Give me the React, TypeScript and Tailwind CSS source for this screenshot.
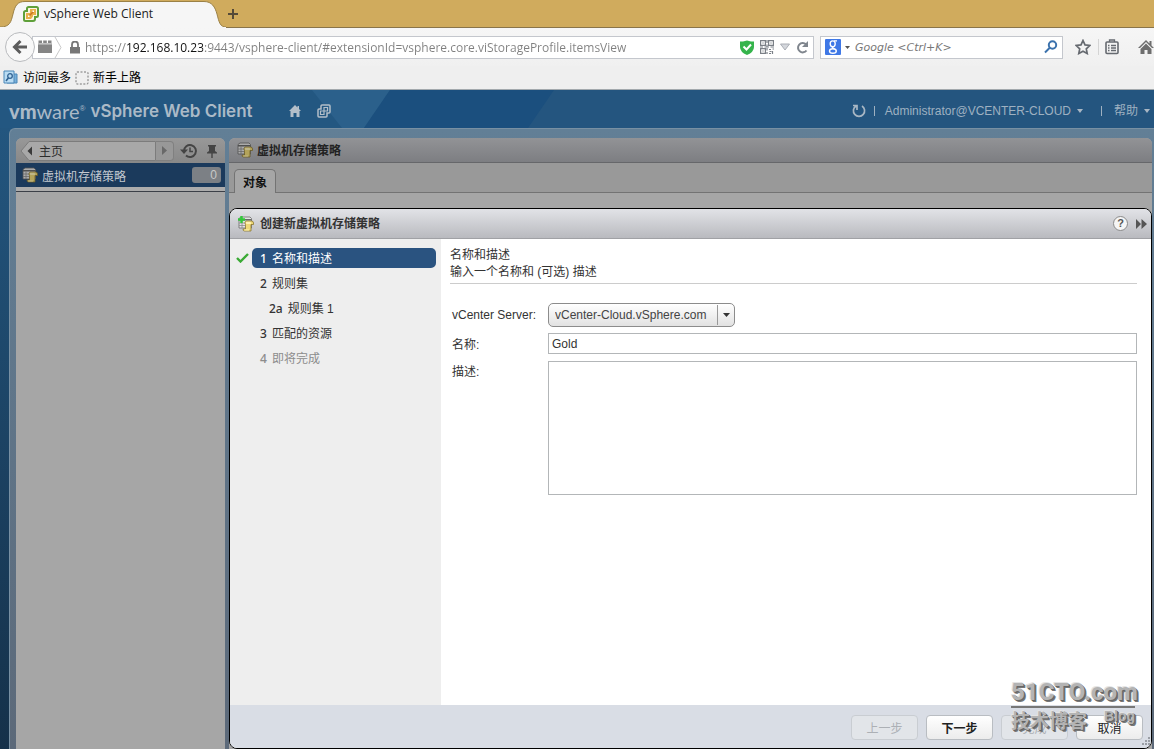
import { useState } from 'react';

const UI_FONT = 'font-["Liberation_Sans","Noto_Sans_CJK_SC",sans-serif]';
const CHROME_FONT = 'font-["Open_Sans","Noto_Sans_CJK_SC",sans-serif]';

interface Step {
  id: string;
  no: string;
  label: string;
  sub?: boolean;
  disabled?: boolean;
}

const STEPS: Step[] = [
  { id: 'name', no: '1', label: '名称和描述' },
  { id: 'rules', no: '2', label: '规则集' },
  { id: 'rules-1', no: '2a', label: '规则集 1', sub: true },
  { id: 'resources', no: '3', label: '匹配的资源' },
  { id: 'finish', no: '4', label: '即将完成', disabled: true },
];

function VSphereLogo() {
  return (
    <svg width="16" height="16" viewBox="0 0 16 16" fill="none">
      <path d="M5.5 1h8A1.5 1.5 0 0 1 15 2.5v7a1.5 1.5 0 0 1-1.5 1.500H12v2a2 2 0 0 1-2 2H2.500A1.500 1.500 0 0 1 1 13.500V6.500A1.500 1.500 0 0 1 2.500 5H4V2.500A1.500 1.500 0 0 1 5.500 1z" fill="#fdf6e4" stroke="#5fa03a" strokeWidth="2" />
      <path d="M7 3h6v6h-3v1.500L8 13H3V7h4z" fill="#e8b04a" />
      <path d="M6.500 9.500l4-4" stroke="#c9731f" strokeWidth="1.500" />
      <path d="M5 9.500h1.500V11H5zM9.500 4.500H11V6H9.500z" fill="#fff" />
    </svg>
  );
}

function PolicyIcon({ dim, add }: { dim?: boolean; add?: boolean }) {
  return (
    <svg width="16" height="16" viewBox="0 0 16 16" className={dim ? 'brightness-75' : ''}>
      <path d="M1 2.500L3 1h9l1.500 1.500V12H1z" fill="#e4e4e4" stroke="#6a6a6a" strokeWidth=".8" />
      <path d="M1 3h12.500v1.500H1z" fill="#6a6a6a" />
      <path d="M1 7h6M1 9.500h6M4 4.500V12" stroke="#8c8c8c" strokeWidth=".8" />
      <path d="M8 5h5.500Q15.500 5 15.500 7v1.500H13V15H6.500Q5 15 5 13h2.500V8.500Q6 7 8 5z" fill="#efd978" stroke="#8b7732" strokeWidth=".8" />
      <path d="M8 5.800h4.500Q13 6.500 13 8H8.500Q7.500 7 8 5.800zM5.800 13.500H11V14.400H6.500z" fill="#fff3b4" />
      {add && <path d="M3.500 0v7M0 3.500h7" stroke="#32c83a" strokeWidth="2.400" />}
    </svg>
  );
}

function BrowserTabs() {
  return (
    <div className="relative flex h-7 items-center border-b border-[#89744a] bg-[#d0ab5d]">
      <svg className="absolute left-0 top-0" width="226" height="28" viewBox="0 0 226 28">
        <path d="M0 28V27C10 27 11 22 13 14C15 5 18 1.500 25 1.500H204C212 1.500 215 7 217 14C219 22 220 27 226 27V28z" fill="#f6f6f6" stroke="#9b8146" strokeWidth="1" />
        <path d="M0 27.500H226" stroke="#f6f6f6" />
      </svg>
      <div className={`relative flex w-[227px] items-center gap-1 pl-[23px] text-xs text-[#222] ${CHROME_FONT}`}>
        <VSphereLogo />
        <span className="pl-px">vSphere Web Client</span>
      </div>
      <button aria-label="New tab" className="relative">
        <svg width="12" height="12" viewBox="0 0 12 12">
          <path d="M6 1v10M1 6h10" stroke="#554a38" strokeWidth="2" />
        </svg>
      </button>
    </div>
  );
}

function AddressBar() {
  const [url, setUrl] = useState('https://192.168.10.23:9443/vsphere-client/#extensionId=vsphere.core.viStorageProfile.itemsView');

  return (
    <div className="relative flex min-w-0 flex-1 items-center">
      <button aria-label="Back" className="absolute left-0 flex h-[30px] w-[30px] items-center justify-center rounded-full border border-[#b9bbbe] bg-[#f8f8f8]">
        <svg width="16" height="16" viewBox="0 0 16 16" fill="none">
          <path d="M8.500 2L2.500 8l6 6M3 8h12" stroke="#5c5c5c" strokeWidth="3" />
        </svg>
      </button>
      <div className="ml-[27px] flex h-[23px] min-w-0 flex-1 items-center border border-[#c4c7cd] bg-white pl-1 pr-1">
        <svg width="16" height="14" viewBox="0 0 16 14" className="shrink-0">
          <path d="M1 3.500h14V13H1zM1.500 0.500h3.500v2.500H1.500zM6.200 0.500h3.600v2.500H6.200zM11 0.500h3.500v2.500H11z" fill="#858585" />
          <path d="M1 4.500h14" stroke="#aaa" />
        </svg>
        <svg width="8" height="21" viewBox="0 0 8 21" className="ml-px shrink-0" fill="none">
          <path d="M1 0l6 10.500L1 21" stroke="#c8c8c8" />
        </svg>
        <svg width="10" height="13" viewBox="0 0 10 13" className="ml-2 shrink-0">
          <path d="M0 6h10v6.500H0z" fill="#777" />
          <path d="M2 7V3.500a3 3 0 0 1 6 0V7" stroke="#777" strokeWidth="1.800" fill="none" />
        </svg>
        <input
          aria-label="URL"
          value={url}
          onChange={(e) => setUrl(e.target.value)}
          className={`ml-[5px] min-w-0 flex-1 bg-[linear-gradient(90deg,#808080_0_41px,#111_41px_118px,#808080_118px)] bg-clip-text pt-0.5 text-xs text-transparent outline-none ${CHROME_FONT}`}
        />
        <div className="flex shrink-0 items-center gap-1.5">
          <svg width="14" height="15" viewBox="0 0 14 15">
            <path d="M0 1.500h3L7 .5l4 1h3V7q0 5-7 8Q0 12 0 7z" fill="#35b44c" />
            <path d="M3.500 6.500L6.500 9.500l4.500-5" stroke="#fff" strokeWidth="2" fill="none" />
          </svg>
          <svg width="14" height="14" viewBox="0 0 14 14" fill="none" stroke="#7b8087" strokeWidth="1.200">
            <path d="M.6.6h4.800v4.800H.6zM8.600.6h4.800v4.800H8.600zM.6 8.600h4.800v4.800H.6z" />
            <path d="M2.400 3h1.200M10.400 3h1.200M2.400 11h1.200M7 0v3M7 4.500v2M0 7h3M4.500 7H9M10.500 7H14M7 8v2.500M7 12v2M9 9.500h2M12.500 9h1.500M9.500 11.500h2M12.500 11v3M9 13.500h2" />
          </svg>
          <svg width="10" height="8" viewBox="0 0 10 8">
            <path d="M.5 1h9L5 7z" fill="#d4d7dc" stroke="#aaaeb5" />
          </svg>
          <svg width="13" height="13" viewBox="0 0 13 13" fill="none">
            <path d="M10.500 9.500A4.700 4.700 0 1 1 10 3.300" stroke="#7f858d" strokeWidth="2" />
            <path d="M12 0v6H6z" fill="#7f858d" />
          </svg>
        </div>
      </div>
    </div>
  );
}

function SearchBox() {
  return (
    <div className="ml-1.5 flex h-[23px] w-[243px] shrink-0 items-center border border-[#c4c7cd] bg-white pl-1 pr-1">
      <svg width="16" height="16" viewBox="0 0 16 16" className="shrink-0" fill="none">
        <rect width="16" height="16" rx="1" fill="#3f78e6" />
        <ellipse cx="7.700" cy="4.800" rx="2.500" ry="2.900" stroke="#fff" strokeWidth="1.400" />
        <ellipse cx="7.900" cy="12" rx="3.400" ry="2.300" stroke="#fff" strokeWidth="1.400" />
        <path d="M9 1.900h3M7.800 7.500Q6.500 8.500 9.500 9.800" stroke="#fff" strokeWidth="1.400" />
      </svg>
      <svg width="5" height="3" viewBox="0 0 5 3" className="ml-1 shrink-0">
        <path d="M0 0h5L2.500 3z" fill="#555" />
      </svg>
      <input
        aria-label="Search"
        placeholder="Google <Ctrl+K>"
        className="ml-[5px] min-w-0 flex-1 bg-transparent pt-0.5 font-['DejaVu_Sans',sans-serif] text-[11px] italic outline-none placeholder:text-[#777]"
      />
      <svg width="14" height="14" viewBox="0 0 14 14" fill="none" stroke="#3b72ad" strokeWidth="2">
        <circle cx="8.500" cy="5" r="3.700" />
        <path d="M6 7.500L1 12.500" />
      </svg>
    </div>
  );
}

function BrowserToolbar() {
  return (
    <div className="flex h-[38px] items-center overflow-hidden bg-linear-to-b from-[#f6f6f6] to-[#f0f0f0] pl-[5px]">
      <AddressBar />
      <SearchBox />
      <div className="flex shrink-0 items-center pl-3">
        <button aria-label="Bookmark">
          <svg width="16" height="16" viewBox="0 0 16 16" fill="none">
            <path d="M8 1.500l2 4.400 4.800.6-3.500 3.300.9 4.700L8 12.200l-4.200 2.300.9-4.700L1.200 6.500 6 5.900z" stroke="#666a70" strokeWidth="1.700" />
          </svg>
        </button>
        <span className="ml-[7px] h-4 w-px bg-[#d4d4d4]" />
        <button aria-label="Bookmarks list" className="ml-1.5">
          <svg width="14" height="16" viewBox="0 0 14 16" fill="none" stroke="#666a70" strokeWidth="1.600">
            <rect x="1" y="3" width="12" height="11.500" rx="1" />
            <path d="M4.500 3V1h5v2M3 6.500h1.500M6 6.500h5M3 9h1.500M6 9h5M3 11.500h1.500M6 11.500h5" strokeWidth="1.300" />
          </svg>
        </button>
        <button aria-label="Home" className="ml-[19px]">
          <svg width="16" height="16" viewBox="0 0 16 16" fill="#6e6e6e">
            <path d="M8 1L0 9h2l6-6 6 6h2l-2.500-2.500V2h-2v2.500z" />
            <path d="M8 4.500L2.500 10v5h4v-4h3v4h4v-5z" />
          </svg>
        </button>
      </div>
    </div>
  );
}

function BookmarksBar() {
  return (
    <div className={`flex h-6 items-center border-b border-[#a3a9ad] bg-[#efefef] pl-[3px] text-xs text-black ${CHROME_FONT}`}>
      <a href="#most" className="flex items-center gap-1">
        <svg width="16" height="15" viewBox="0 0 16 15" fill="none">
          <path d="M4 4h10v9H4z" fill="#77aed8" stroke="#4b87b8" />
          <path d="M1 1h10v12H1z" fill="#b9dcf3" stroke="#4b87b8" />
          <circle cx="7" cy="6" r="2.300" stroke="#2f6293" strokeWidth="1.300" />
          <path d="M5.500 7.800L3 11" stroke="#2f6293" strokeWidth="1.600" />
        </svg>
        访问最多
      </a>
      <a href="#start" className="ml-1 flex items-center gap-1">
        <svg width="14" height="14" viewBox="0 0 14 14" fill="none">
          <rect x="1" y="1" width="12" height="12" rx="1" stroke="#777" strokeDasharray="2 1.500" />
        </svg>
        新手上路
      </a>
    </div>
  );
}

function ClientHeader() {
  return (
    <header className="relative flex h-[38px] shrink-0 items-center bg-[#24557f] pl-[9px] pr-1 pt-1">
      <svg className="absolute left-0 top-0" width="554" height="38" viewBox="0 0 554 38">
        <path d="M0 0h390l-26 38H0z" fill="#235781" />
        <path d="M312 0h78l-26 38h-22z" fill="#2b608b" />
        <path d="M390 0h164l-26 38H364z" fill="#1b4f7e" />
      </svg>
      <h1 className="relative flex items-center text-[#abbac7]">
        <span className="font-[Lato,sans-serif] text-xl font-black leading-6">vm</span>
        <span className="font-[Lato,sans-serif] text-xl leading-6">ware</span>
        <span className="mb-1 text-[8px]">®</span>
        <span className="ml-[5px] font-[Inter,sans-serif] text-[17px] font-semibold leading-6">vSphere Web Client</span>
      </h1>
      <button aria-label="Home" className="relative ml-9">
        <svg width="12" height="12" viewBox="0 0 12 12" fill="#b4bfc9">
          <path d="M6 0L0 6h1.500v6h3V8h3v4h3V6H12L10 4V1H8.500v1.500z" />
        </svg>
      </button>
      <button aria-label="vCenter" className="relative ml-4">
        <svg width="14" height="14" viewBox="0 0 14 14" fill="none" stroke="#b4bfc9" strokeWidth="1.500">
          <path d="M5 1h7q1 0 1 1v6q0 1-1 1h-2v3q0 1-1 1H2q-1 0-1-1V6q0-1 1-1h2V2q0-1 1-1z" />
          <path d="M7 3.500h3.500V7H7zM3.500 7H7v3.500H3.500z" strokeWidth="1.200" />
        </svg>
      </button>
      <div className="relative ml-auto flex items-center text-xs text-[#9fb1c1]">
        <button aria-label="Refresh">
          <svg width="14" height="14" viewBox="0 0 14 14" fill="none" stroke="#a9b7c4" strokeWidth="1.700">
            <path d="M10 2a5.600 5.600 0 1 1-6 0M1 1.500h4V6" />
          </svg>
        </button>
        <span className="ml-2 h-2.5 w-px bg-[#9fb1c1]" />
        <button className="ml-2.5 flex items-center gap-1.5">
          Administrator@VCENTER-CLOUD
          <svg width="6" height="4" viewBox="0 0 6 4" fill="#a9b7c4"><path d="M0 0h6L3 4z" /></svg>
        </button>
        <span className="ml-[18px] h-2.5 w-px bg-[#9fb1c1]" />
        <button className="ml-3 flex items-center gap-1.5">
          帮助
          <svg width="6" height="4" viewBox="0 0 6 4" fill="#a9b7c4"><path d="M0 0h6L3 4z" /></svg>
        </button>
      </div>
    </header>
  );
}

function Navigator() {
  return (
    <aside className="flex w-[209px] shrink-0 flex-col overflow-hidden rounded-t-md bg-[#a6a6a6]">
      <div className="flex h-[25px] shrink-0 items-center bg-linear-to-b from-[#989898] to-[#888] pl-1">
        <button className="relative flex h-5 w-[136px] items-center pl-[19px] pt-0.5 text-xs text-[#2b2b2b]">
          <svg className="absolute left-0 top-0" width="136" height="20" viewBox="0 0 136 20">
            <path d="M1 10L9 .5h126.500v19H9z" fill="#a8a8a8" stroke="#7c7c7c" />
            <path d="M12 5.500v9L7.500 10z" fill="#3a3a3a" />
          </svg>
          <span className="relative">主页</span>
        </button>
        <button aria-label="Forward" className="flex h-5 w-[18px] items-center justify-center rounded-r border border-l-0 border-[#808080] bg-[#989898]">
          <svg width="5" height="9" viewBox="0 0 5 9" fill="#696969"><path d="M0 0v9l5-4.500z" /></svg>
        </button>
        <button aria-label="History" className="ml-1.5">
          <svg width="18" height="16" viewBox="0 0 18 16" fill="none" stroke="#444" strokeWidth="2">
            <path d="M4 8a6 6 0 1 1 2 4.500" />
            <path d="M10 4.500V8.500h3" strokeWidth="1.500" />
            <path d="M0 6.500h8L4 11z" fill="#444" stroke="none" />
          </svg>
        </button>
        <button aria-label="Pin" className="ml-2">
          <svg width="12" height="14" viewBox="0 0 12 14" fill="#444">
            <path d="M2 1h8v1.500H9V7l2 1.500V9.500H6.700V14H5.300V9.500H1V8.500L3 7V2.500H2z" />
          </svg>
        </button>
      </div>
      <a href="#policies" className="flex h-6 shrink-0 items-center bg-[#1b3a5c] pl-1.5 pr-1 text-xs text-[#c3c9d0]">
        <PolicyIcon dim />
        <span className="ml-1 pt-1">虚拟机存储策略</span>
        <span className="ml-auto h-4 w-[29px] rounded-[3px] bg-[#7c8085] pr-1 text-right leading-4 text-[#c8c8c8]">0</span>
      </a>
      <div className="h-1 shrink-0 bg-[#acacac]" />
      <div className="flex-1 border-t border-[#3c4048]" />
    </aside>
  );
}

function WizardSteps() {
  const [active, setActive] = useState('name');

  return (
    <nav className="w-[211px] shrink-0 bg-[#eee] pl-1 pt-[9px]">
      <ol className="flex flex-col gap-[5px] pr-[5px]">
        {STEPS.map((step) => (
          <li key={step.id} className="flex items-center">
            <span className="w-[18px] shrink-0 pl-0.5">
              {step.id === 'name' && (
                <svg width="13" height="10" viewBox="0 0 13 10" fill="none">
                  <path d="M1 5l3.500 3.500L12 1" stroke="#3aaa35" strokeWidth="2.400" />
                </svg>
              )}
            </span>
            <button
              disabled={step.disabled}
              onClick={() => setActive(step.id)}
              className={`flex h-5 flex-1 items-center gap-[5px] rounded-[5px] pt-0.5 text-xs ${step.sub ? 'pl-[17px]' : 'pl-2'} ${
                active === step.id ? 'bg-[#2a5380] text-white' : step.disabled ? 'text-[#8c8c8c]' : 'text-[#333]'
              }`}
            >
              <span className='font-["Noto_Sans",sans-serif] font-medium'>{step.no}</span>
              {step.label}
            </button>
          </li>
        ))}
      </ol>
    </nav>
  );
}

function WizardForm() {
  const [name, setName] = useState('Gold');
  const [description, setDescription] = useState('');

  return (
    <div className="min-w-0 flex-1 bg-white pl-[9px] pr-[14px] pt-2 text-xs text-[#333]">
      <div className="border-b border-[#ccc] pb-0.5 leading-[17px]">
        <h3>名称和描述</h3>
        <p>输入一个名称和 (可选) 描述</p>
      </div>
      <div className="mt-[19px] grid grid-cols-[96px_1fr] gap-y-1.5 pl-0.5">
        <label htmlFor="vcenter" className="leading-6">vCenter Server:</label>
        <div className="relative h-6 w-[187px]">
          <select
            id="vcenter"
            className="h-6 w-full appearance-none rounded-[5px] border border-[#8c8c8c] bg-linear-to-b from-white to-[#e2e2e2] pb-px pl-1.5 text-[#444]"
          >
            <option>vCenter-Cloud.vSphere.com</option>
          </select>
          <span className="pointer-events-none absolute right-0 top-[2px] flex h-5 w-[18px] items-center justify-center border-l border-[#999]">
            <svg width="7" height="4" viewBox="0 0 7 4"><path d="M0 0h7L3.500 4z" fill="#333" /></svg>
          </span>
        </div>
        <label htmlFor="name" className="pt-0.5 leading-5">名称:</label>
        <input
          id="name"
          value={name}
          onChange={(e) => setName(e.target.value)}
          className="h-[21px] border border-[#b3b6b8] pl-[3px] text-[#333] outline-none"
        />
        <label htmlFor="description" className="leading-[22px]">描述:</label>
        <textarea
          id="description"
          value={description}
          onChange={(e) => setDescription(e.target.value)}
          className="h-[134px] resize-none border border-[#b3b6b8] p-[3px] outline-none"
        />
      </div>
    </div>
  );
}

function WizardButton({ label, primary, disabled }: { label: string; primary?: boolean; disabled?: boolean }) {
  return (
    <button
      disabled={disabled}
      className={`h-[25px] w-[67px] rounded border pt-0.5 text-xs ${
        disabled
          ? 'border-[#c9cdd2] bg-[#e2e5e9] text-[#acb0b5]'
          : 'border-[#b9bdc2] bg-linear-to-b from-white to-[#ececec] text-[#222]'
      } ${primary ? 'font-bold' : ''}`}
    >
      {label}
    </button>
  );
}

function Watermark() {
  return (
    <div className="pointer-events-none absolute bottom-4 right-4 flex w-[124px] flex-col text-[#b4b4b4] [text-shadow:1px_1px_0_#666,2px_2px_0_#777,-1px_-1px_0_#e4e4e4]">
      <span className="font-[Roboto,sans-serif] text-2xl font-extrabold leading-7">51CTO.com</span>
      <span className="h-0.5 bg-[#777]" />
      <span className="flex items-start justify-between">
        <span className='font-["Noto_Sans_CJK_SC",sans-serif] text-[19px] font-bold leading-6'>技术博客</span>
        <span className='font-["Liberation_Sans",sans-serif] text-sm font-bold leading-4'>Blog</span>
      </span>
    </div>
  );
}

function Wizard() {
  return (
    <section className="relative flex min-h-[400px] flex-1 flex-col overflow-hidden rounded-lg border border-black bg-white">
      <div className="flex h-[30px] shrink-0 items-center border-b border-[#a0a1a5] bg-linear-to-b from-[#e2e3e7] to-[#b9babf] pl-2 pr-1">
        <PolicyIcon add />
        <h2 className="ml-1.5 text-xs font-bold text-[#333]">创建新虚拟机存储策略</h2>
        <button aria-label="Help" className="ml-auto flex h-[15px] w-[15px] items-center justify-center rounded-full border border-[#8a8a8a] bg-[#f5f5f5] text-[11px] font-bold text-[#555]">
          ?
        </button>
        <button aria-label="Minimize" className="ml-2">
          <svg width="11" height="10" viewBox="0 0 11 10" fill="#555"><path d="M0 0l5 5-5 5zM5.500 0l5.500 5-5.500 5z" /></svg>
        </button>
      </div>
      <div className="flex flex-1">
        <WizardSteps />
        <WizardForm />
      </div>
      <div className="flex h-[43px] shrink-0 items-end justify-end gap-2 bg-[#d9dde5] pb-2 pr-2">
        <WizardButton label="上一步" disabled />
        <WizardButton label="下一步" primary />
        <WizardButton label="完成" disabled />
        <WizardButton label="取消" />
      </div>
      <svg className="absolute bottom-px right-px" width="10" height="10" viewBox="0 0 10 10" fill="#9a9ea5">
        <path d="M8 0h2v2H8zM5 3h2v2H5zM8 3h2v2H8zM2 6h2v2H2zM5 6h2v2H5zM8 6h2v2H8z" />
      </svg>
      <Watermark />
    </section>
  );
}

export default function App() {
  return (
    <div className={`flex min-h-screen flex-col ${UI_FONT}`}>
      <div className="shrink-0">
        <BrowserTabs />
        <BrowserToolbar />
        <BookmarksBar />
      </div>
      <ClientHeader />
      <div className="flex flex-1 flex-col bg-linear-to-b from-[#23567f] to-[#15314a] pl-[9px]">
        <main className="flex flex-1 gap-1 rounded-tl-md border-l border-t border-[#7890a3] bg-linear-to-b from-[#627f96] to-[#5c6979] pl-1.5 pr-0.5 pt-[9px]">
          <Navigator />
          <div className="flex min-w-0 flex-1 flex-col rounded-t-md bg-[#a6a6a6]">
            <div className="flex h-[25px] shrink-0 items-center rounded-t-md border-b border-[#66676a] bg-linear-to-b from-[#929396] to-[#7d7e82] pl-2">
              <PolicyIcon dim />
              <h2 className="ml-1 pt-0.5 text-xs font-bold text-[#222]">虚拟机存储策略</h2>
            </div>
            <div className="flex h-[30px] shrink-0 items-end border-b border-[#737373] bg-[#999] pl-[5px]">
              <button className="-mb-px h-6 w-[42px] rounded-t-[5px] border border-b-0 border-[#737373] bg-[#a6a6a6] pt-0.5 text-xs font-bold text-[#111]">
                对象
              </button>
            </div>
            <div className="flex flex-1 flex-col pt-[15px]">
              <Wizard />
            </div>
          </div>
        </main>
      </div>
    </div>
  );
}
